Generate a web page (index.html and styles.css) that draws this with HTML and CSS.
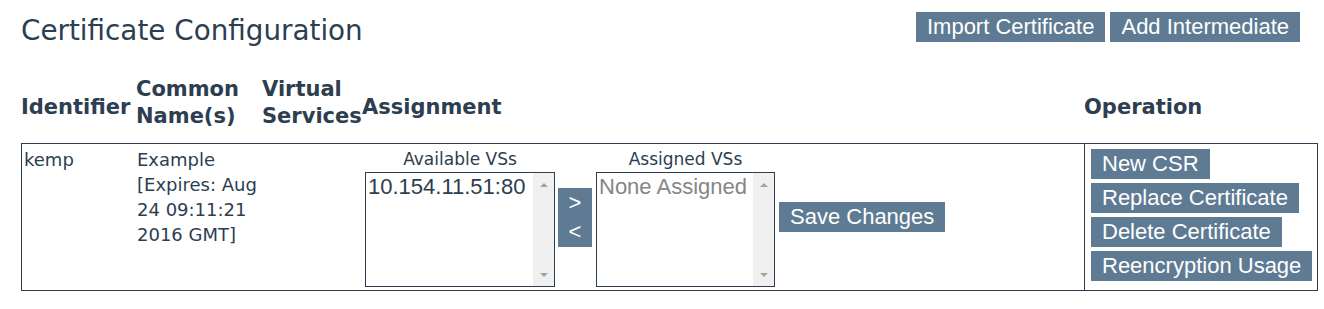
FILE: index.html
```html
<!DOCTYPE html>
<html lang="en">
<head>
<meta charset="utf-8">
<title>Certificate Configuration</title>
<link rel="stylesheet" href="styles.css">
</head>
<body>
<div class="page">
  <div class="topbar">
    <h1 class="title">Certificate Configuration</h1>
    <div class="actions">
      <button class="btn">Import Certificate</button>
      <button class="btn">Add Intermediate</button>
    </div>
  </div>

  <div class="cols head">
    <div class="th single">Identifier</div>
    <div class="th">Common<br>Name(s)</div>
    <div class="th">Virtual<br>Services</div>
    <div class="th single">Assignment</div>
    <div class="th single">Operation</div>
  </div>

  <div class="cols body">
    <div class="td">kemp</div>
    <div class="td">Example<br>[Expires: Aug<br>24 09:11:21<br>2016 GMT]</div>
    <div class="td"></div>
    <div class="td assign">
      <div class="vs">
        <div class="vs-label">Available VSs</div>
        <div class="listbox avail">
          <div class="options"><div class="opt">10.154.11.51:80</div></div>
          <div class="scroll"><span class="arr up"></span><span class="arr down"></span></div>
        </div>
      </div>
      <button class="btn move">&gt;<br>&lt;</button>
      <div class="vs">
        <div class="vs-label">Assigned VSs</div>
        <div class="listbox assigned">
          <div class="options"><div class="opt muted">None Assigned</div></div>
          <div class="scroll"><span class="arr up"></span><span class="arr down"></span></div>
        </div>
      </div>
      <button class="btn save">Save Changes</button>
    </div>
    <div class="td ops">
      <button class="btn">New CSR</button>
      <button class="btn">Replace Certificate</button>
      <button class="btn">Delete Certificate</button>
      <button class="btn">Reencryption Usage</button>
    </div>
  </div>
</div>
</body>
</html>
```

FILE: styles.css
```css
* { box-sizing: border-box; }

html, body {
  margin: 0;
  padding: 0;
  background: #ffffff;
}

body {
  font-family: "DejaVu Sans", sans-serif;
  color: #2c3e50;
}

.page {
  padding: 0 6px 0 21px;
}

.topbar {
  display: flex;
  justify-content: space-between;
  align-items: flex-start;
  padding-top: 12px;
  padding-right: 18px;
}

.title {
  margin: 2.5px 0 0 0;
  font-size: 27.8px;
  font-weight: normal;
  line-height: 32px;
  color: #2c3e50;
}

.actions {
  display: flex;
  gap: 5px;
}

.btn {
  display: block;
  margin: 0;
  border: 0;
  border-radius: 0;
  background: #5e7b93;
  color: #ffffff;
  font-family: "Liberation Sans", Arial, sans-serif;
  font-size: 22px;
  line-height: 30px;
  height: 30px;
  padding: 0 11px;
  white-space: nowrap;
  cursor: pointer;
}

.cols {
  display: grid;
}

.head {
  grid-template-columns: 115px 126px 100px 722px 234px;
  align-items: center;
  margin-top: 29.5px;
  margin-bottom: 14px;
}

.th {
  font-size: 21px;
  font-weight: bold;
  line-height: 26.5px;
  white-space: nowrap;
}

.th.single {
  padding-top: 9px;
}

.body {
  grid-template-columns: 114px 126px 100px 722px 233px;
  border: 1px solid #2c3e50;
}

.td {
  font-size: 18px;
  line-height: 25px;
  padding: 3px 1px;
  white-space: nowrap;
}

.td:first-child {
  padding-left: 2px;
}

.assign {
  display: flex;
  align-items: center;
  padding: 0 0 0 3px;
}

.vs {
  display: flex;
  flex-direction: column;
}

.vs-label {
  font-size: 17px;
  line-height: 25px;
  text-align: center;
}

.listbox {
  display: flex;
  height: 115px;
  border: 1px solid #2c3e50;
  background: #ffffff;
}

.avail { width: 190px; }
.assigned { width: 179px; }

.options {
  flex: 1;
  padding: 1px 2px;
  font-family: "Liberation Sans", Arial, sans-serif;
  font-size: 22px;
  line-height: 25px;
  color: #2c3e50;
  overflow: hidden;
}

.opt.muted {
  color: #868686;
}

.scroll {
  width: 21px;
  background: #f0f0f0;
  display: flex;
  flex-direction: column;
  justify-content: space-between;
  align-items: center;
  padding: 10px 0 9px;
}

.arr {
  width: 0;
  height: 0;
  border-left: 4px solid transparent;
  border-right: 4px solid transparent;
}

.arr.up { border-bottom: 4px solid #a3a3a3; }
.arr.down { border-top: 4px solid #a3a3a3; }

.btn.move {
  width: 34px;
  height: 59px;
  padding: 0;
  line-height: 29px;
  text-align: center;
  margin: 0 4px 0 3px;
}

.btn.save {
  margin-left: 4px;
}

.ops {
  border-left: 1px solid #2c3e50;
  display: flex;
  flex-direction: column;
  align-items: flex-start;
  gap: 4px;
  padding: 5px 6px 9px;
}
```
